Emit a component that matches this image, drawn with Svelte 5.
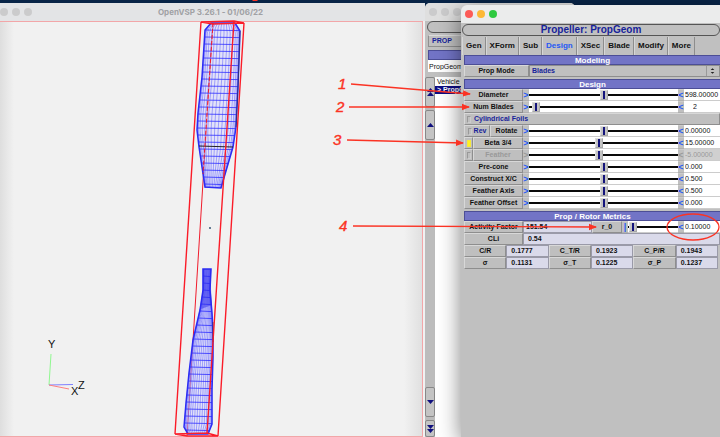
<script lang="ts">
  type Point = [number, number];

  interface Parm {
    id: string;
    label: string;
    value: string;
    pos: number;
    toggle?: string;
    checked?: boolean;
    disabled?: boolean;
  }

  const tabs = ['Gen', 'XForm', 'Sub', 'Design', 'XSec', 'Blade', 'Modify', 'More'];
  let activeTab = $state('Design');

  let sizeParms: Parm[] = $state([
    { id: 'diameter', label: 'Diameter', value: '598.00000', pos: 50 },
    { id: 'blades', label: 'Num Blades', value: '2', pos: 2 },
  ]);

  let angleParms: Parm[] = $state([
    { id: 'rotate', label: 'Rotate', value: '0.00000', pos: 50, toggle: 'Rev' },
    { id: 'beta', label: 'Beta 3/4', value: '15.00000', pos: 47, toggle: '', checked: true },
    { id: 'feather', label: 'Feather', value: '-5.00000', pos: 47, toggle: '', disabled: true },
    { id: 'precone', label: 'Pre-cone', value: '0.000', pos: 50 },
    { id: 'construct', label: 'Construct X/C', value: '0.500', pos: 50 },
    { id: 'axis', label: 'Feather Axis', value: '0.500', pos: 50 },
    { id: 'offset', label: 'Feather Offset', value: '0.000', pos: 50 },
  ]);

  const metrics = [
    ['C/R', '0.1777'],
    ['C_T/R', '0.1923'],
    ['C_P/R', '0.1943'],
    ['σ', '0.1131'],
    ['σ_T', '0.1225'],
    ['σ_P', '0.1237'],
  ];

  let r0 = $state({ value: '0.10000', pos: 2 });

  // blade silhouettes, top to bottom, left and right edge
  const upper = {
    left: [[211, 23], [205, 30], [202, 77], [198, 113], [197, 130], [199, 147], [205, 187]] as Point[],
    right: [[235, 23], [240, 31], [239, 60], [238, 87], [236, 127], [233, 147], [221, 188]] as Point[],
  };
  const lower = {
    left: [[203, 269], [203, 290], [200, 310], [193, 340], [189, 373], [186, 403], [184, 427], [188, 434]] as Point[],
    right: [[211, 269], [210, 290], [212, 313], [213, 333], [213, 357], [212, 390], [212, 424], [208, 434]] as Point[],
  };

  function edgeAt(edge: Point[], y: number) {
    for (let i = 1; i < edge.length; i++) {
      const [x0, y0] = edge[i - 1];
      const [x1, y1] = edge[i];
      if (y <= y1) return x0 + ((x1 - x0) * (y - y0)) / (y1 - y0);
    }
    return edge[edge.length - 1][0];
  }

  function mesh(blade: { left: Point[]; right: Point[] }, top: number, bottom: number) {
    const ribs: string[] = [];
    const spars: string[] = [];
    for (let y = top + 7; y < bottom; y += 7) {
      ribs.push(`M${edgeAt(blade.left, y)} ${y}L${edgeAt(blade.right, y)} ${y + 0.6}`);
    }
    const count = 17;
    for (let i = 1; i < count; i++) {
      const t = (1 - Math.cos((Math.PI * i) / count)) / 2;
      const pts: string[] = [];
      for (let y = top; y <= bottom; y += 5) {
        const l = edgeAt(blade.left, y);
        const r = edgeAt(blade.right, y);
        pts.push(`${(l + (r - l) * t).toFixed(1)} ${y}`);
      }
      spars.push('M' + pts.join('L'));
    }
    const outline = 'M' + [...blade.left, ...[...blade.right].reverse()].map((p) => p.join(' ')).join('L') + 'Z';
    return { ribs: ribs.join(''), spars: spars.join(''), outline };
  }

  const blades = [mesh(upper, 23, 188), mesh(lower, 269, 434)];

  const callouts = [
    { n: 1, x: 338, y: 89, from: [351, 84], to: [470, 94] },
    { n: 2, x: 336, y: 112, from: [349, 107], to: [469, 107] },
    { n: 3, x: 333, y: 145, from: [347, 140], to: [463, 143] },
    { n: 4, x: 339, y: 231, from: [353, 226], to: [596, 227] },
  ];
</script>

{#snippet parmRow(p: Parm)}
  <div class="row" class:off={p.disabled}>
    <div class="name">
      {#if p.toggle !== undefined}
        <label class="cell toggle" class:wide={p.toggle}>
          <input type="checkbox" aria-label={p.toggle || p.label + ' on'} checked={p.checked} />
          {p.toggle}
        </label>
      {/if}
      <label class="cell grow" for={p.id}>{p.label}</label>
    </div>
    <button class="step" disabled={p.disabled} aria-label="Increase range">&gt;</button>
    <input class="slider" type="range" step="any" aria-label={p.label} bind:value={p.pos} disabled={p.disabled} />
    <button class="step" disabled={p.disabled} aria-label="Decrease range">&lt;</button>
    <input class="value" class:center={p.id === 'blades'} id={p.id} type="text" bind:value={p.value} disabled={p.disabled} />
  </div>
{/snippet}

<main class="desktop">
  <section class="window viewer">
    <header class="titlebar">
      <div class="lights"><i></i><i></i><i></i></div>
      <h1>OpenVSP 3.26.1 - 01/06/22</h1>
    </header>
    <div class="viewport"></div>
    <svg class="scene" viewBox="0 0 425 437" width="425" height="437" fill="none">
      <path d="M213 23L187 436" stroke="#f01c2c" />
      {#each blades as b}
        <path d={b.outline} fill="#d4d4ff" fill-opacity="0.5" />
        <path d={b.spars} stroke="#3838ff" stroke-opacity="0.5" stroke-width="0.8" />
        <path d={b.ribs} stroke="#3030ff" stroke-opacity="0.8" />
        <path d={b.outline} stroke="#2c2cf4" stroke-width="1.5" />
      {/each}
      <path d="M203 269h8v20l1 16-11 4 2-20z" fill="#2828e8" fill-opacity="0.45" />
      <path d="M240 31L239 60L238 87L236 127M213 322v20" stroke="#334" stroke-width="0.7" />
      <path d="M199 146L233 147" stroke="#222" />
      <path d="M213 23L203 174" stroke="#f01c2c" stroke-dasharray="4 2" />
      <path
        d="M201 22L234 21L244 23L213 24ZM201 22L175 434M244 23L218 436M234 21L207 433M175 434L207 433L218 436L187 436Z"
        stroke="#fb1c28"
        stroke-width="1.4"
      />
      <circle cx="210" cy="228" r="0.9" fill="#246" />
      <path d="M49 385L51 354" stroke="#90f890" />
      <path d="M49 385L73 384.5" stroke="#8080ff" />
      <path d="M49 385L69 389" stroke="#ff8080" />
      <g class="axis">
        <text x="48" y="348">Y</text>
        <text x="71" y="395">X</text>
        <text x="78" y="389">Z</text>
      </g>
    </svg>
  </section>

  <section class="window manager">
    <header class="titlebar">
      <div class="lights"><i></i><i></i><i></i></div>
    </header>
    <div class="pill"></div>
    <button class="prop">PROP</button>
    <div class="bar"></div>
    <input class="geom" type="text" aria-label="Geom name" value="PropGeom" />
    <div class="tree">
      <div class="scroll">
        <button class="tall" aria-label="Top"><svg viewBox="0 0 7 8"><path d="M0 4L3.5 0L7 4ZM0 8L3.5 4L7 8Z" /></svg></button>
        <button class="tall" aria-label="Up"><svg viewBox="0 0 7 8"><path d="M0 6L3.5 2L7 6Z" /></svg></button>
        <span class="trough"></span>
        <button class="tall" aria-label="Down"><svg viewBox="0 0 7 8"><path d="M0 2L3.5 6L7 2Z" /></svg></button>
        <button class="tall last" aria-label="Bottom"><svg viewBox="0 0 7 8"><path d="M0 0L3.5 4L7 0ZM0 4L3.5 8L7 4Z" /></svg></button>
      </div>
      <ul>
        <li>Vehicle</li>
        <li class="selected">&gt; PropGeom</li>
      </ul>
    </div>
  </section>

  <section class="window propeller">
    <header class="titlebar">
      <div class="lights"><i class="close"></i><i class="min"></i><i class="zoom"></i></div>
    </header>
    <h2>Propeller: PropGeom</h2>
    <nav>
      {#each tabs as tab}
        <button class:active={tab === activeTab} onclick={() => (activeTab = tab)}>{tab}</button>
      {/each}
    </nav>
    <div class="body">
      <h3 class="bar">Modeling</h3>
      <div class="row mode">
        <label class="cell" for="mode">Prop Mode</label>
        <div class="choice">
          <select id="mode"><option>Blades</option></select>
          <svg viewBox="0 0 12 10" width="12" height="10"><path d="M4 4L6 2L8 4ZM4 6L6 8L8 6Z" /></svg>
        </div>
      </div>

      <h3 class="bar">Design</h3>
      {#each sizeParms as p}
        {@render parmRow(p)}
      {/each}
      <label class="cell foils"><input type="checkbox" />Cylindrical Foils</label>
      {#each angleParms as p}
        {@render parmRow(p)}
      {/each}

      <h3 class="bar metrics-bar">Prop / Rotor Metrics</h3>
      <div class="row factor">
        <span class="cell">Activity Factor</span>
        <output>151.54</output>
        <label class="cell" for="r0">r_0</label>
        <button class="step" aria-label="Range">|</button>
        <input class="slider" type="range" step="any" aria-label="r_0" bind:value={r0.pos} />
        <button class="step" aria-label="Decrease range">&lt;</button>
        <input class="value" id="r0" type="text" bind:value={r0.value} />
      </div>
      <div class="row cli">
        <span class="cell">CLi</span>
        <output>0.54</output>
      </div>
      <div class="metrics">
        {#each metrics as [name, value]}
          <span class="cell">{name}</span>
          <output>{value}</output>
        {/each}
      </div>
    </div>
  </section>

  <svg class="callouts" viewBox="0 0 720 437" width="720" height="437">
    <defs>
      <marker id="head" markerUnits="userSpaceOnUse" markerWidth="8" markerHeight="8" refX="7" refY="4" orient="auto">
        <path d="M0 0.8L8 4L0 7.2Z" fill="#fb3324" />
      </marker>
    </defs>
    {#each callouts as c}
      <text x={c.x} y={c.y}>{c.n}</text>
      <line x1={c.from[0]} y1={c.from[1]} x2={c.to[0]} y2={c.to[1]} marker-end="url(#head)" />
    {/each}
    <ellipse cx="693" cy="227" rx="26" ry="13" />
    <path d="M252 0h6l-1 1h-4z" fill="#fb3324" />
  </svg>
</main>

<style>
  :global(body) {
    margin: 0;
  }

  .desktop {
    position: relative;
    min-height: 100vh;
    overflow: hidden;
    background: #082447;
    font: bold 7px/10px 'Liberation Sans', Arial, sans-serif;
    color: #111;
  }

  .desktop * {
    box-sizing: border-box;
  }

  button,
  input,
  select {
    margin: 0;
    padding: 0;
    border: 0;
    border-radius: 0;
    font: inherit;
    color: inherit;
    background: none;
    appearance: none;
    outline: none;
  }

  .window {
    position: absolute;
    bottom: 0;
    display: flex;
    flex-direction: column;
    background: #c0c0c0;
  }

  .titlebar {
    display: flex;
    align-items: center;
    flex: none;
    height: 18px;
    background: #e3e4e6;
  }

  .lights {
    display: flex;
    gap: 4px;
  }

  .lights i {
    width: 8px;
    height: 8px;
    border-radius: 50%;
    background: #cbcbcc;
  }

  .lights .close {
    background: #fc5b57;
  }

  .lights .min {
    background: #fdb836;
  }

  .lights .zoom {
    background: #2fc940;
  }

  /* 3D viewer */
  .viewer {
    top: 3px;
    left: 0;
    width: 425px;
    background: #f1f1f1;
  }

  .viewer .titlebar {
    position: relative;
    justify-content: center;
  }

  .viewer .lights {
    position: absolute;
    left: 0;
  }

  .viewer h1 {
    margin: 0;
    padding-right: 4px;
    font: bold 8px/16px Inter, sans-serif;
    color: #a0a1a4;
  }

  .viewport {
    flex: 1;
    margin-right: 2px;
    border: 1px solid #f2a6a8;
    border-left: 0;
    background: linear-gradient(to right, #dedede, #f1f1f1 14px, #f1f1f1 calc(100% - 18px), #e0e0e0);
  }

  .scene {
    position: absolute;
    top: -3px;
    left: 0;
  }

  .axis {
    font: normal 11px 'Liberation Sans', Arial, sans-serif;
    fill: #111;
  }

  /* geometry manager */
  .manager {
    top: 3px;
    left: 425px;
    width: 150px;
    border-radius: 5px 5px 0 0;
  }

  .manager .titlebar {
    padding-left: 4px;
    border-radius: 5px 5px 0 0;
    background: #dfdfdf;
  }

  .pill {
    flex: none;
    height: 12px;
    margin: 0 2px 2px;
    border: 1px solid #555;
    border-radius: 6px;
  }

  .prop {
    flex: none;
    height: 12px;
    margin: 0 3px 3px;
    padding-left: 3px;
    border: 1px solid #909090;
    border-top-color: #ddd;
    font-size: 7px;
    text-align: left;
    color: #17239a;
  }

  .bar {
    flex: none;
    height: 10px;
    margin: 0;
    border: 1px solid #4c4e96;
    border-right: 0;
    font-size: 8px;
    line-height: 10px;
    text-align: center;
    color: #fff;
    background: #7274c6;
  }

  .manager .bar {
    margin-left: 3px;
  }

  .geom {
    flex: none;
    height: 12px;
    margin: 0 0 5px 3px;
    padding-left: 1px;
    font-weight: normal;
    background: #fff;
  }

  .tree {
    display: flex;
    flex: 1;
  }

  .scroll {
    display: flex;
    flex-direction: column;
    gap: 3px;
    width: 10px;
    background: #bcbcbc;
  }

  .tall {
    height: 30px;
    border: 1px solid #888;
    border-radius: 2px;
    background: #c4c4c4;
  }

  .tall svg {
    display: block;
    width: 7px;
    margin: auto;
    fill: #10107e;
  }

  .tall.last {
    height: 17px;
  }

  .trough {
    flex: 1;
  }

  .tree ul {
    flex: 1;
    margin: 0;
    padding: 1px 0 0;
    list-style: none;
    background: #fff;
  }

  .tree li {
    height: 8px;
    padding-left: 2px;
    font-weight: normal;
    line-height: 8px;
  }

  .tree .selected {
    font-weight: bold;
    color: #fff;
    background: #0c0c84;
  }

  /* propeller editor */
  .propeller {
    top: 5px;
    left: 461px;
    right: 0;
    border-radius: 6px 0 0;
    box-shadow: 0 6px 22px rgba(0, 0, 0, 0.5);
  }

  .propeller .titlebar {
    padding-left: 4px;
    border-radius: 6px 0 0;
    background: #ebecec;
  }

  h2 {
    flex: none;
    margin: 1px 0 1px 1px;
    border: 1px solid #555;
    border-radius: 6px;
    font-size: 10px;
    line-height: 10px;
    text-align: center;
    color: #17239a;
  }

  nav {
    display: flex;
    flex: none;
    height: 18px;
    padding-left: 1px;
  }

  nav button {
    padding: 0 3px;
    border-right: 1px solid #8d8d8d;
    border-left: 1px solid #d6d6d6;
    font-size: 8px;
  }

  nav .active {
    color: #2458f4;
  }

  .body {
    display: flex;
    flex-direction: column;
    padding-left: 3px;
  }

  .row {
    display: flex;
    height: 12px;
  }

  .mode {
    margin-bottom: 2px;
  }

  .metrics-bar {
    margin-top: 2px;
  }

  .cell {
    display: flex;
    align-items: center;
    justify-content: center;
    height: 12px;
    border: 1px solid #8e8e8e;
    border-top-color: #d8d8d8;
    border-left-color: #d8d8d8;
    line-height: 10px;
    white-space: nowrap;
    background: #bfbfbf;
  }

  .name {
    display: flex;
    width: 59px;
  }

  .grow {
    flex: 1;
  }

  .toggle {
    width: 9px;
    color: #17239a;
  }

  .toggle.wide {
    gap: 2px;
    width: 26px;
  }

  input[type='checkbox'] {
    width: 4px;
    height: 7px;
    border: 1px solid #999;
    border-right-color: #ccc;
    border-bottom-color: #ccc;
  }

  input[type='checkbox']:checked {
    background: #fff21c;
    border-color: #f4e83c;
  }

  .foils {
    justify-content: flex-start;
    gap: 3px;
    padding-left: 2px;
    color: #17239a;
  }

  .mode .cell {
    width: 65px;
  }

  .choice {
    position: relative;
    flex: 1;
    border: 1px solid #8e8e8e;
  }

  .choice select {
    display: block;
    width: 100%;
    height: 10px;
    padding-left: 2px;
    line-height: 10px;
    color: #17239a;
  }

  .choice svg {
    position: absolute;
    top: 0;
    right: 1px;
    border-left: 1px solid #999;
    fill: #222;
    pointer-events: none;
  }

  .step {
    width: 6px;
    border: 1px solid #b0b0b0;
    border-width: 1px 0;
    border-top-color: #ccc;
    font-size: 9px;
    line-height: 8px;
    color: #2458f4;
    background: #c0c0c0;
  }

  .slider {
    flex: 1;
    min-width: 0;
    height: 12px;
    border-bottom: 1px solid #ccc;
    background: linear-gradient(#0a0a0a, #0a0a0a) center / 100% 2px no-repeat #fff;
  }

  .slider::-webkit-slider-thumb {
    appearance: none;
    width: 8px;
    height: 10px;
    border: 1px solid #a8a8a8;
    border-top-color: #ddd;
    border-left-color: #ddd;
    background: linear-gradient(#14147c, #14147c) center / 2px 8px no-repeat #c4c4c4;
  }

  .value {
    width: 36px;
    padding-left: 1px;
    border-bottom: 1px solid #ccc;
    font-weight: normal;
    background: #fff;
  }

  .value.center {
    padding-left: 9px;
  }

  .off,
  .off .step {
    color: #999;
  }

  .off .value {
    background: #d0d0d0;
  }

  output {
    height: 12px;
    padding-left: 4px;
    border: 1px solid #9a9aa8;
    line-height: 10px;
    background: #dadaea;
  }

  .factor .cell,
  .cli .cell {
    width: 59px;
  }

  .factor output {
    width: 69px;
    padding-left: 2px;
  }

  .factor label.cell {
    width: 30px;
  }

  .cli output {
    flex: 1;
  }

  .metrics {
    display: grid;
    grid-template-columns: repeat(6, 1fr);
    padding-right: 2px;
  }

  .callouts {
    position: absolute;
    top: 0;
    left: 0;
    fill: none;
    stroke: #fb3324;
    stroke-width: 1.3;
    pointer-events: none;
  }

  .callouts text {
    font: italic 15px 'Liberation Sans', Arial, sans-serif;
    fill: #fb3324;
    stroke-width: 0.4;
  }

  .callouts path {
    stroke: none;
  }
</style>
